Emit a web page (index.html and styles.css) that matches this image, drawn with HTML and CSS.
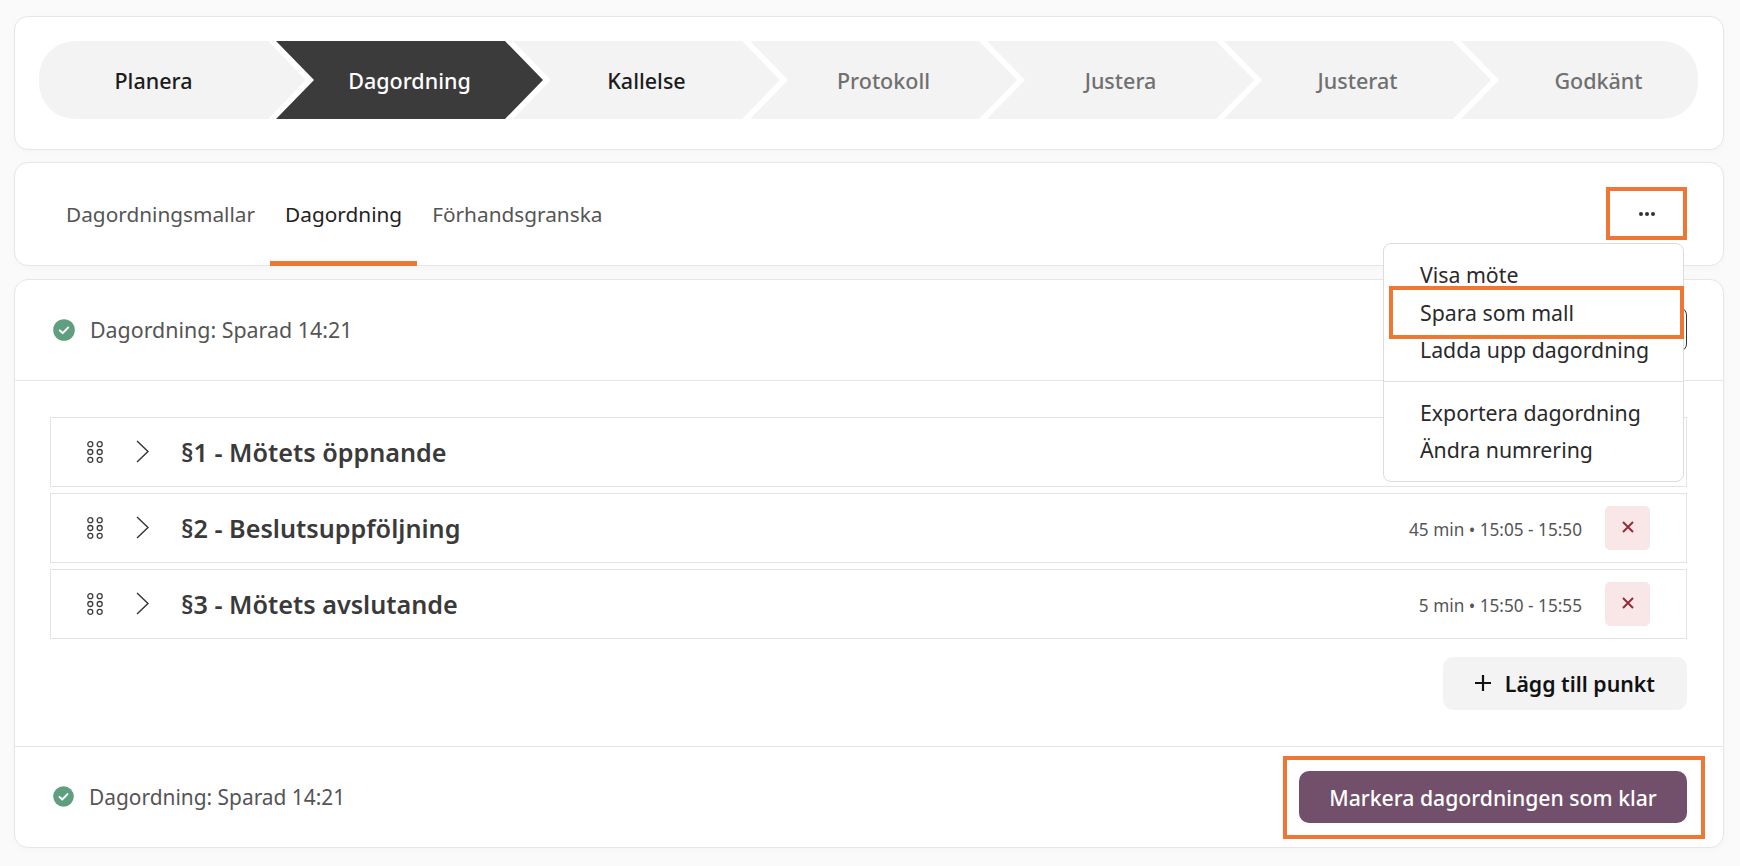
FILE: index.html
```html
<!DOCTYPE html>
<html lang="sv">
<head>
<meta charset="utf-8">
<title>Dagordning</title>
<link rel="stylesheet" href="styles.css">
</head>
<body>
<main class="page">
  <section class="card stepper-card">
    <ol class="stepper">
      <li class="step step-first">Planera</li>
      <li class="step step-active">Dagordning</li>
      <li class="step">Kallelse</li>
      <li class="step step-off">Protokoll</li>
      <li class="step step-off">Justera</li>
      <li class="step step-off">Justerat</li>
      <li class="step step-off step-last">Godkänt</li>
    </ol>
  </section>

  <section class="card tabs-card">
    <nav class="tabs">
      <a class="tab">Dagordningsmallar</a>
      <a class="tab tab-active">Dagordning</a>
      <a class="tab">Förhandsgranska</a>
    </nav>
    <div class="more">
      <button class="more-btn" aria-label="Mer">
        <svg width="18" height="6" viewBox="0 0 18 6"><circle cx="3" cy="3" r="2" /><circle cx="9" cy="3" r="2" /><circle cx="15" cy="3" r="2" /></svg>
      </button>
      <ul class="menu">
        <li class="menu-item">Visa möte</li>
        <li class="menu-item menu-item-marked">Spara som mall<span class="mark"></span></li>
        <li class="menu-item">Ladda upp dagordning</li>
        <li class="menu-sep"></li>
        <li class="menu-item">Exportera dagordning</li>
        <li class="menu-item">Ändra numrering</li>
      </ul>
    </div>
  </section>

  <section class="card agenda-card">
    <header class="agenda-head">
      <div class="status">
        <svg class="check" width="22" height="22" viewBox="0 0 22 22"><circle cx="11" cy="11" r="10.8" fill="#5f9f80"/><path d="M6.8 11.4l2.9 2.7 5.5-5.6" fill="none" stroke="#fff" stroke-width="2" stroke-linecap="round" stroke-linejoin="round"/></svg>
        <span>Dagordning: Sparad 14:21</span>
      </div>
      <button class="ghost-btn"></button>
    </header>

    <div class="agenda-body">
      <div class="row">
        <svg class="grip" width="16" height="22" viewBox="0 0 16 22"><g fill="none" stroke="#3c3c3c" stroke-width="1.3"><circle cx="3.3" cy="3.2" r="2.5"/><circle cx="12.7" cy="3.2" r="2.5"/><circle cx="3.3" cy="11" r="2.5"/><circle cx="12.7" cy="11" r="2.5"/><circle cx="3.3" cy="18.8" r="2.5"/><circle cx="12.7" cy="18.8" r="2.5"/></g></svg>
        <svg class="caret" width="13" height="23" viewBox="0 0 13 23"><path d="M1 1l11 10.5L1 22" fill="none" stroke="#333" stroke-width="1.4"/></svg>
        <h3 class="row-title">§1 - Mötets öppnande</h3>
      </div>
      <div class="row">
        <svg class="grip" width="16" height="22" viewBox="0 0 16 22"><g fill="none" stroke="#3c3c3c" stroke-width="1.3"><circle cx="3.3" cy="3.2" r="2.5"/><circle cx="12.7" cy="3.2" r="2.5"/><circle cx="3.3" cy="11" r="2.5"/><circle cx="12.7" cy="11" r="2.5"/><circle cx="3.3" cy="18.8" r="2.5"/><circle cx="12.7" cy="18.8" r="2.5"/></g></svg>
        <svg class="caret" width="13" height="23" viewBox="0 0 13 23"><path d="M1 1l11 10.5L1 22" fill="none" stroke="#333" stroke-width="1.4"/></svg>
        <h3 class="row-title">§2 - Beslutsuppföljning</h3>
        <span class="row-time">45 min • 15:05 - 15:50</span>
        <button class="del" aria-label="Ta bort"><svg width="12" height="12" viewBox="0 0 12 12"><path d="M1 1l10 10M11 1L1 11" stroke="#8f2d3c" stroke-width="2"/></svg></button>
      </div>
      <div class="row">
        <svg class="grip" width="16" height="22" viewBox="0 0 16 22"><g fill="none" stroke="#3c3c3c" stroke-width="1.3"><circle cx="3.3" cy="3.2" r="2.5"/><circle cx="12.7" cy="3.2" r="2.5"/><circle cx="3.3" cy="11" r="2.5"/><circle cx="12.7" cy="11" r="2.5"/><circle cx="3.3" cy="18.8" r="2.5"/><circle cx="12.7" cy="18.8" r="2.5"/></g></svg>
        <svg class="caret" width="13" height="23" viewBox="0 0 13 23"><path d="M1 1l11 10.5L1 22" fill="none" stroke="#333" stroke-width="1.4"/></svg>
        <h3 class="row-title">§3 - Mötets avslutande</h3>
        <span class="row-time">5 min • 15:50 - 15:55</span>
        <button class="del" aria-label="Ta bort"><svg width="12" height="12" viewBox="0 0 12 12"><path d="M1 1l10 10M11 1L1 11" stroke="#8f2d3c" stroke-width="2"/></svg></button>
      </div>
      <div class="add-wrap">
        <button class="add-btn">
          <svg width="18" height="18" viewBox="0 0 18 18"><path d="M9 1v16M1 9h16" stroke="#111" stroke-width="2.2"/></svg>
          Lägg till punkt
        </button>
      </div>
    </div>

    <footer class="agenda-foot">
      <div class="status status-foot">
        <svg class="check" width="21" height="21" viewBox="0 0 22 22"><circle cx="11" cy="11" r="10.8" fill="#5f9f80"/><path d="M6.8 11.4l2.9 2.7 5.5-5.6" fill="none" stroke="#fff" stroke-width="2" stroke-linecap="round" stroke-linejoin="round"/></svg>
        <span>Dagordning: Sparad 14:21</span>
      </div>
      <div class="done-mark">
        <button class="done-btn">Markera dagordningen som klar</button>
      </div>
    </footer>
  </section>
</main>
</body>
</html>
```
FILE: styles.css
```css
* { box-sizing: border-box; }

html, body { margin: 0; padding: 0; }

body {
  background: #fafafa;
  color: #333;
  font-family: "Noto Sans", "Inter", sans-serif;
  font-size: 21px;
}

button { font-family: inherit; }

.page {
  display: flex;
  flex-direction: column;
  gap: 13px;
  padding: 16px 16px 19px 14px;
}

.card {
  background: #fff;
  border: 1px solid #e6e6e6;
  border-radius: 14px;
  box-shadow: 0 2px 8px rgba(0, 0, 0, 0.025);
}

/* stepper */
.stepper-card { height: 134px; margin-bottom: -1px; padding: 24px 25px 0 24px; }

.stepper {
  display: grid;
  grid-template-columns: repeat(7, 1fr);
  height: 78px;
  margin: 0;
  padding: 0;
  list-style: none;
  overflow: hidden;
  border-radius: 36px;
}

.step {
  display: flex;
  align-items: center;
  justify-content: center;
  margin-right: -30px;
  padding: 0 38px;
  background: #f3f3f3;
  color: #1c1c1c;
  font-weight: 500;
  font-size: 21.5px;
  clip-path: polygon(0 0, calc(100% - 38px) 0, 100% 50%, calc(100% - 38px) 100%, 0 100%, 38px 50%);
}

.step-first {
  padding-left: 0;
  clip-path: polygon(0 0, calc(100% - 38px) 0, 100% 50%, calc(100% - 38px) 100%, 0 100%);
}

.step-last {
  margin-right: 0;
  padding-right: 0;
  clip-path: polygon(0 0, 100% 0, 100% 100%, 0 100%, 38px 50%);
}

.step-active { background: #3b3b3b; color: #fff; }
.step-off { color: #707070; }

/* tabs */
.tabs-card {
  display: flex;
  align-items: center;
  justify-content: space-between;
  height: 104px;
  padding: 0 36px;
}

.tabs { display: flex; align-self: stretch; }

.tab {
  display: flex;
  align-items: center;
  padding: 0 15px 2px;
  border-top: 5px solid transparent;
  border-bottom: 5px solid transparent;
  margin-bottom: -1px;
  color: #555;
  font-size: 20.8px;
}

.tab-active { color: #222; border-bottom-color: #ee7733; }

.more { position: relative; margin-top: -1px; }

.more-btn {
  display: flex;
  align-items: center;
  justify-content: center;
  width: 81px;
  height: 53px;
  padding: 0;
  background: #fff;
  border: 4px solid #ee7733;
}

.more-btn svg { fill: #333; }

.menu {
  position: absolute;
  z-index: 5;
  top: calc(100% + 3px);
  right: 3px;
  width: 301px;
  margin: 0;
  padding: 12px 0;
  list-style: none;
  background: #fff;
  border: 1px solid #dcdcdc;
  border-radius: 8px;
}

.menu-item {
  position: relative;
  display: flex;
  align-items: center;
  height: 37.5px;
  padding-left: 36px;
  color: #2a2a2a;
  font-size: 21.3px;
}

.menu-sep {
  height: 1px;
  margin: 12px 0;
  background: #e0e0e0;
}

.mark {
  position: absolute;
  top: -8px;
  bottom: -8px;
  left: 5px;
  right: -1px;
  border: 4px solid #ee7733;
}

/* agenda */
.agenda-card { height: 569px; display: flex; flex-direction: column; }

.agenda-head {
  display: flex;
  align-items: center;
  justify-content: space-between;
  height: 101px;
  padding: 0 36px 0 38px;
  border-bottom: 1px solid #e6e6e6;
}

.status {
  display: flex;
  align-items: center;
  gap: 15px;
  color: #555;
  font-size: 21.4px;
}

.status-foot { font-size: 20.9px; }

.ghost-btn {
  width: 120px;
  height: 45px;
  background: #fff;
  border: 1px solid #333;
  border-radius: 8px;
}

.agenda-body {
  flex: 1;
  display: flex;
  flex-direction: column;
  gap: 6px;
  padding: 36px 36px 36px 35px;
}

.row {
  display: flex;
  align-items: center;
  height: 70px;
  padding: 0 36px;
  border: 1px solid #e3e3e3;
}

.caret { margin-left: 33px; }

.row-title {
  flex: 1;
  margin: 0 0 0 32px;
  color: #3a3a3a;
  font-size: 25.2px;
  font-weight: 600;
}

.row-time { color: #555; font-size: 17.2px; padding-top: 4px; }

.del {
  display: flex;
  align-items: center;
  justify-content: center;
  width: 45px;
  height: 44px;
  margin-left: 23px;
  padding: 0 0 2px;
  background: #f9e6e7;
  border: 0;
  border-radius: 5px;
}

.add-wrap { display: flex; justify-content: flex-end; padding-top: 12px; }

.add-btn {
  display: flex;
  align-items: center;
  gap: 13px;
  height: 53px;
  padding: 0 32px 0 31px;
  background: #f3f3f3;
  border: 0;
  border-radius: 10px;
  color: #111;
  font-size: 21.3px;
  font-weight: 600;
}

.agenda-foot {
  display: flex;
  align-items: center;
  justify-content: space-between;
  height: 102px;
  padding: 0 18px 0 38px;
  border-top: 1px solid #e6e6e6;
}

.done-mark { margin-top: 2px; padding: 11px 14px 12px 12px; border: 4px solid #ee7733; }

.done-btn {
  display: block;
  width: 388px;
  height: 52px;
  padding: 0;
  background: #72506b;
  border: 0;
  border-radius: 10px;
  color: #fff;
  font-size: 21.2px;
  font-weight: 500;
}
```
